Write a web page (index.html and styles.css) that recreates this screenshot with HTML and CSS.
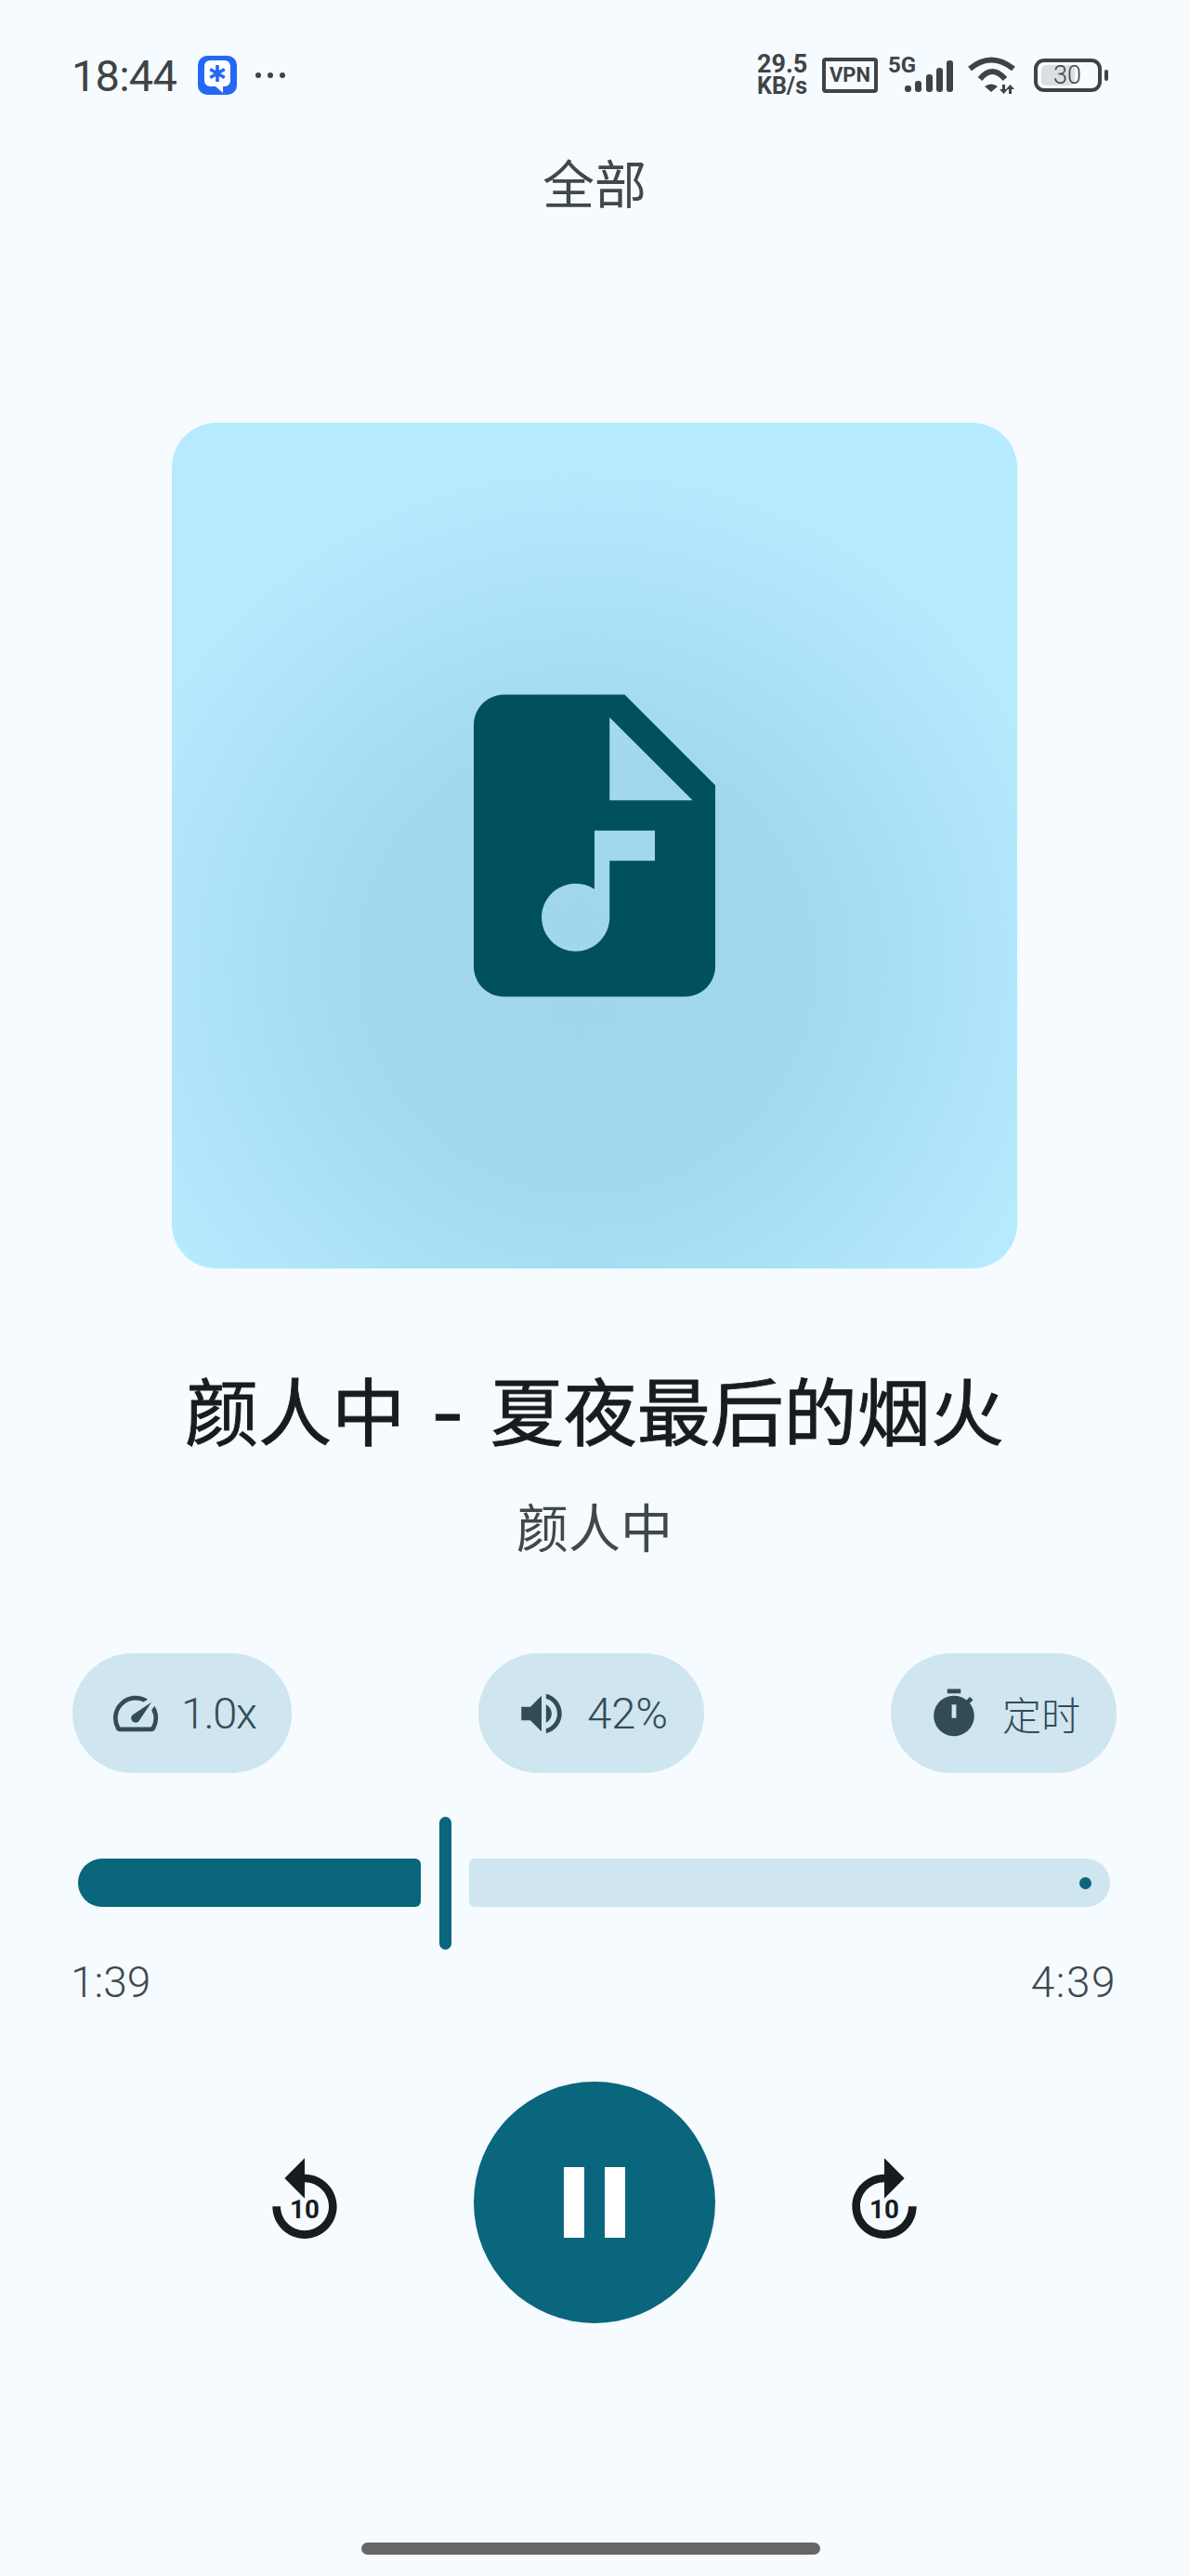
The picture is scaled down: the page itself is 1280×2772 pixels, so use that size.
FILE: index.html
```
<!DOCTYPE html>
<html lang="zh">
<head>
<meta charset="utf-8">
<title>全部</title>
<link rel="stylesheet" href="styles.css">
</head>
<body>
<div class="page">

  <div class="statusbar">
    <div class="status-left">
      <span class="clock">18:44</span>
      <svg class="app-icon" viewBox="0 0 42 42">
        <rect width="42" height="42" rx="10" fill="#2469f3"/>
        <path d="M13 5h16a6 6 0 0 1 6 6v16a6 6 0 0 1-6 6h-2v7l-8-7h-6a6 6 0 0 1-6-6V11a6 6 0 0 1 6-6z" fill="#fff"/>
        <path d="M21 10v18M13.2 14.5l15.6 9M28.800 14.500l-15.600 9" stroke="#2469f3" stroke-width="3.600" fill="none"/>
      </svg>
      <span class="more-dots"><i></i><i></i><i></i></span>
    </div>
    <div class="status-right">
      <div class="netspeed"><span>29.5</span><span>KB/s</span></div>
      <div class="vpn">VPN</div>
      <svg class="signal" width="70" height="52" viewBox="0 -6 70 52">
        <text x="0" y="17" class="signal-label">5G</text>
        <rect x="18" y="31" width="7" height="7" rx="3"/>
        <rect x="29" y="26" width="7" height="12" rx="3"/>
        <rect x="41" y="19" width="7" height="19" rx="3"/>
        <rect x="52" y="12" width="7" height="26" rx="3"/>
        <rect x="63" y="4" width="7" height="34" rx="3"/>
      </svg>
      <svg class="wifi" width="54" height="40" viewBox="0 0 54 40">
        <path d="M3 13Q26-6 50 13" fill="none" stroke="#3f4346" stroke-width="6"/>
        <path d="M14 24Q27 8 41 24" fill="none" stroke="#3f4346" stroke-width="6"/>
        <path d="M19 32q7-5 14 0l-7 6z" fill="#3f4346"/>
        <path d="M38 30h3v5h3l-4.500 5-4.500-5h3zM48 40h-3v-5h-3l4.500-5 4.500 5h-3z" fill="#3f4346"/>
      </svg>
      <svg class="battery" width="80" height="36" viewBox="0 0 80 36">
        <rect x="8" y="7" width="36" height="22" rx="5" fill="#dcdfe1"/>
        <rect x="2" y="2" width="69" height="32" rx="9" fill="none" stroke="#3f4346" stroke-width="4"/>
        <rect x="76" y="12" width="4" height="12" rx="2" fill="#3f4346"/>
        <text x="36" y="27" text-anchor="middle" class="battery-label">30</text>
      </svg>
    </div>
  </div>

  <h2 class="list-title">全部</h2>

  <div class="artwork">
    <svg class="artwork-icon" viewBox="0 0 24 24">
      <path d="M14 2H6c-1.100 0-2 .9-2 2v16c0 1.100.9 2 2 2h12c1.100 0 2-.9 2-2V8l-6-6zm2 11h-3v3.750c0 1.240-1.010 2.250-2.250 2.250S8.500 17.990 8.500 16.750c0-1.240 1.010-2.250 2.250-2.250.46 0 .89.14 1.250.38V11h4v2zm-3-4V3.500L18.500 9H13z"/>
    </svg>
  </div>

  <h1 class="song-title">颜人中 <span class="song-dash">-</span> 夏夜最后的烟火</h1>
  <div class="song-artist">颜人中</div>

  <div class="chips">
    <div class="chip">
      <svg class="chip-icon" viewBox="0 0 24 24">
        <path d="M20.380 8.570l-1.230 1.850a8 8 0 0 1-.22 7.580H5.070A8 8 0 0 1 15.580 6.850l1.850-1.230A10 10 0 0 0 3.350 19a2 2 0 0 0 1.720 1h13.850a2 2 0 0 0 1.740-1 10 10 0 0 0-.27-10.440z"/>
        <path d="M10.590 15.410a2 2 0 0 0 2.830 0l5.660-8.490-8.490 5.660a2 2 0 0 0 0 2.830z"/>
      </svg>
      <span class="chip-speed">1.0x</span>
    </div>
    <div class="chip">
      <svg class="chip-icon" viewBox="0 0 24 24">
        <path d="M3 9v6h4l5 5V4L7 9H3zm13.500 3c0-1.770-1.020-3.290-2.500-4.030v8.050c1.480-.73 2.500-2.250 2.500-4.020zM14 3.230v2.060c2.890.86 5 3.540 5 6.710s-2.110 5.850-5 6.710v2.060c4.010-.91 7-4.490 7-8.770s-2.990-7.860-7-8.770z"/>
      </svg>
      <span>42%</span>
    </div>
    <div class="chip">
      <svg class="chip-icon" viewBox="0 0 24 24">
        <path d="M9 1h6v2H9zM19.030 7.390l1.420-1.420c-.43-.51-.9-.99-1.410-1.410l-1.420 1.420C16.070 4.740 14.120 4 12 4c-4.970 0-9 4.030-9 9 0 4.970 4.020 9 9 9s9-4.030 9-9c0-2.120-.74-4.070-1.970-5.610zM13 14h-2V8h2v6z"/>
      </svg>
      <span class="chip-cjk">定时</span>
    </div>
  </div>

  <div class="slider">
    <div class="slider-active"></div>
    <div class="slider-handle"></div>
    <div class="slider-track"><i class="slider-stop"></i></div>
  </div>
  <div class="times">
    <span>1:39</span>
    <span class="time-total">4:39</span>
  </div>

  <div class="controls">
    <svg class="seek" viewBox="0 0 24 24">
      <path d="M12 5V1L7 6l5 5V7c3.300 0 6 2.700 6 6s-2.700 6-6 6-6-2.700-6-6H4c0 4.400 3.600 8 8 8s8-3.600 8-8-3.600-8-8-8z"/>
      <text x="12" y="15.900" text-anchor="middle" class="seek-label">10</text>
    </svg>
    <div class="play-btn"><i></i><i></i></div>
    <svg class="seek" viewBox="0 0 24 24">
      <path d="M18 13c0 3.310-2.690 6-6 6s-6-2.690-6-6 2.690-6 6-6v4l5-5-5-5v4c-4.420 0-8 3.580-8 8s3.580 8 8 8 8-3.580 8-8h-2z"/>
      <text x="12" y="15.900" text-anchor="middle" class="seek-label">10</text>
    </svg>
  </div>

  <div class="home-bar"></div>
</div>
</body>
</html>
```

FILE: styles.css
```
html, body {
  margin: 0;
  padding: 0;
}
body {
  background: #f5fbff;
  font-family: "Roboto", "Noto Sans CJK SC", sans-serif;
}
.page {
  display: flex;
  flex-direction: column;
  align-items: center;
  width: 1280px;
  height: 2772px;
  overflow: hidden;
}

/* status bar */
.statusbar {
  display: flex;
  justify-content: space-between;
  align-items: center;
  box-sizing: border-box;
  width: 100%;
  height: 162px;
  padding: 0 87px 0 77px;
  color: #3f4346;
}
.status-left, .status-right {
  display: flex;
  align-items: center;
}
.clock {
  font-size: 47px;
  letter-spacing: -0.800px;
}
.app-icon {
  width: 42px;
  height: 42px;
  margin-left: 23px;
}
.more-dots {
  display: flex;
  gap: 7px;
  margin-left: 20px;
}
.more-dots i {
  width: 6px;
  height: 6px;
  border-radius: 50%;
  background: #3f4346;
}
.netspeed {
  display: flex;
  flex-direction: column;
  width: 56px;
  font-size: 27px;
  font-weight: 700;
  line-height: 23px;
}
.netspeed span + span {
  font-size: 25px;
}
.vpn {
  box-sizing: border-box;
  width: 60px;
  height: 38px;
  margin-left: 14px;
  border: 4px solid #3f4346;
  border-radius: 4px;
  font-size: 22px;
  font-weight: 700;
  line-height: 30px;
  text-align: center;
}
.signal {
  margin-left: 11px;
  fill: #3f4346;
}
.signal-label {
  font-size: 24px;
  font-weight: 700;
}
.wifi {
  margin-left: 15px;
}
.battery {
  margin-left: 18px;
}
.battery-label {
  font-size: 27px;
  font-weight: 300;
  fill: #3f4346;
}

/* header and artwork */
.list-title {
  margin: 2px 0 0;
  font-size: 56px;
  font-weight: 400;
  line-height: 72px;
  color: #41484d;
}
.artwork {
  display: flex;
  justify-content: center;
  align-items: center;
  width: 910px;
  height: 910px;
  margin-top: 219px;
  border-radius: 48px;
  background: radial-gradient(circle at 49% 64%, #a0d7ee 0, #a1d8ef 30%, #b6eaff 72%);
}
.artwork-icon {
  width: 390px;
  height: 390px;
  fill: #01505f;
}
.song-title {
  margin: 108px 0 0;
  font-size: 79px;
  font-weight: 400;
  line-height: 100px;
  word-spacing: 8px;
  color: #171c1f;
  -webkit-text-stroke: 0.9px #171c1f;
}
.song-dash {
  font-family: "Inter", sans-serif;
  line-height: 0;
}
.song-artist {
  margin-top: 38px;
  font-size: 56px;
  line-height: 70px;
  color: #41484d;
}

/* speed, volume, timer */
.chips {
  display: flex;
  justify-content: space-between;
  box-sizing: border-box;
  width: 100%;
  margin-top: 98px;
  padding: 0 78px;
}
.chip {
  display: flex;
  align-items: center;
  gap: 20px;
  height: 129px;
  padding: 0 39px;
  border-radius: 65px;
  background: #cfe5ef;
  color: #334b57;
  font-size: 47px;
  font-weight: 300;
}
.chip-speed {
  letter-spacing: -1.500px;
}
.chip-cjk {
  margin-left: 3px;
  font-size: 42px;
}
.chip-icon {
  width: 58px;
  height: 58px;
  fill: #334b57;
}

/* progress */
.slider {
  display: flex;
  align-items: flex-start;
  box-sizing: border-box;
  width: 100%;
  height: 143px;
  margin-top: 47px;
  padding: 0 85px 0 84px;
}
.slider-active {
  width: 369px;
  height: 52px;
  margin-top: 45px;
  border-radius: 26px 6px 6px 26px;
  background: #0a667c;
}
.slider-handle {
  width: 13px;
  height: 143px;
  margin: 0 19px 0 20px;
  border-radius: 7px;
  background: #0a667c;
}
.slider-track {
  display: flex;
  flex: 1;
  justify-content: flex-end;
  align-items: center;
  height: 52px;
  margin-top: 45px;
  padding-right: 20px;
  border-radius: 6px 26px 26px 6px;
  background: #cfe5ef;
}
.slider-stop {
  width: 13px;
  height: 13px;
  border-radius: 50%;
  background: #0a667c;
}
.times {
  display: flex;
  justify-content: space-between;
  box-sizing: border-box;
  width: 100%;
  margin-top: 10px;
  padding: 0 78px 0 76px;
  color: #41484d;
  font-size: 46px;
  font-weight: 300;
  line-height: 50px;
}
.time-total {
  letter-spacing: 1.500px;
}

/* playback */
.controls {
  display: flex;
  align-items: center;
  gap: 130px;
  margin-top: 82px;
}
.seek {
  width: 104px;
  height: 104px;
  fill: #171c1f;
}
.seek-label {
  font-size: 6.400px;
  font-weight: 700;
}
.play-btn {
  display: flex;
  justify-content: center;
  align-items: center;
  gap: 22px;
  width: 260px;
  height: 260px;
  border-radius: 50%;
  background: #0a667c;
}
.play-btn i {
  width: 22px;
  height: 76px;
  background: #fff;
}
.home-bar {
  width: 494px;
  height: 13px;
  margin-top: 236px;
  margin-right: 8px;
  border-radius: 7px;
  background: #666;
}
```
